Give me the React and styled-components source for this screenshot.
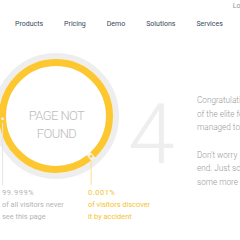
import React from 'react';
import styled, { createGlobalStyle } from 'styled-components';

const GlobalStyle = createGlobalStyle`
  html, body {
    margin: 0;
    padding: 0;
    background: #fff;
    overflow: hidden;
    font-family: Roboto, "Liberation Sans", sans-serif;
  }
`;

const YELLOW = '#fdc82f';

const Page = styled.div`
  width: 240px;
  height: 240px;
  overflow: hidden;
`;

const TopBar = styled.div`
  display: flex;
  justify-content: flex-end;
  height: 12px;
`;

const Login = styled.a`
  margin-right: -10px;
  font-size: 7px;
  line-height: 12px;
  color: #8a94a0;
  text-decoration: none;
`;

const Nav = styled.nav`
  display: flex;
  gap: 21px;
  height: 24px;
  align-items: center;
  padding-left: 15px;
`;

const NavLink = styled.a`
  font-size: 7px;
  font-weight: 400;
  color: #37475a;
  text-decoration: none;
  white-space: nowrap;
`;

const Main = styled.main`
  display: flex;
  align-items: flex-start;
  margin-top: 17px;
`;

const ChartArea = styled.div`
  position: relative;
  flex: 0 0 130px;
  min-width: 0;
  margin-left: -7px;
`;

const ChartSvg = styled.svg`
  display: block;
`;

const ChartLabel = styled.div`
  position: absolute;
  top: 54px;
  left: 0;
  width: 127px;
  text-align: center;
  font-size: 13px;
  font-weight: 300;
  letter-spacing: -0.6px;
  line-height: 18px;
  color: #bdbdbd;
`;

const Stats = styled.div`
  display: flex;
  margin-top: 2px;
  padding-left: 9px;
`;

const Stat = styled.div`
  flex: 0 0 ${p => p.$width}px;
  color: ${p => p.$color};
  font-size: 7.4px;
  line-height: 12px;
  white-space: nowrap;
`;

const StatValue = styled.div`
  letter-spacing: 0.6px;
`;

const Digit = styled.div`
  flex: 0 0 74px;
  margin-top: 39px;
  padding-left: 5px;
  box-sizing: border-box;
  font-size: 84px;
  font-weight: 300;
  line-height: 86px;
  color: #eeeeee;
`;

const Copy = styled.div`
  margin-top: 41px;
  color: #9a9a9a;
  font-size: 8.2px;
  font-weight: 300;
  line-height: 13.7px;
  white-space: nowrap;
`;

const Para = styled.p`
  margin: 0 0 13.5px;
`;

const R = 53.5;
const C = 2 * Math.PI * R;
const GAP = 5;
const GAP_ANGLE = 139;

const polar = (deg, r) => {
  const a = (deg * Math.PI) / 180;
  return [63 + r * Math.sin(a), 63 - r * Math.cos(a)];
};

const Chart = () => {
  const s = (GAP_ANGLE / 360) * C;
  const [gx, gy] = polar(GAP_ANGLE, R);
  const [lx, ly] = polar(267, R);
  return (
    <ChartSvg width="130" height="132" viewBox="0 0 130 132">
      <circle cx="63" cy="63" r="60" fill="#fff" stroke="#eeeeee" strokeWidth="6" />
      <circle cx="63" cy="63" r={R} fill="none" stroke="#f3f3f3" strokeWidth="7" />
      <circle
        cx="63"
        cy="63"
        r={R}
        fill="none"
        stroke={YELLOW}
        strokeWidth="7"
        strokeDasharray={`${C - GAP} ${GAP}`}
        strokeDashoffset={C - s - GAP / 2}
        transform="rotate(-90 63 63)"
      />
      <circle cx={lx} cy={ly} r="1.4" fill="#f4f4f4" />
      <line x1={lx} y1={ly + 4} x2={lx} y2="132" stroke="#e4e4e4" strokeWidth="1" />
      <circle cx={gx} cy={gy} r="1.4" fill={YELLOW} />
      <line x1={gx} y1={gy + 3} x2={gx} y2="132" stroke="#fbe08c" strokeWidth="1" />
    </ChartSvg>
  );
};

export default function App() {
  return (
    <Page>
      <GlobalStyle />
      <TopBar>
        <Login href="#">Login</Login>
      </TopBar>
      <Nav>
        <NavLink href="#">Products</NavLink>
        <NavLink href="#">Pricing</NavLink>
        <NavLink href="#">Demo</NavLink>
        <NavLink href="#">Solutions</NavLink>
        <NavLink href="#">Services</NavLink>
      </Nav>
      <Main>
        <ChartArea>
          <Chart />
          <ChartLabel>
            PAGE NOT
            <br />
            FOUND
          </ChartLabel>
          <Stats>
            <Stat $width={86} $color="#b4b4b4">
              <StatValue>99.999%</StatValue>
              of all visitors never
              <br />
              see this page
            </Stat>
            <Stat $width={80} $color="#f5c22a">
              <StatValue>0.001%</StatValue>
              of visitors discover
              <br />
              it by accident
            </Stat>
          </Stats>
        </ChartArea>
        <Digit>4</Digit>
        <Copy>
          <Para>
            Congratulations, you're one
            <br />
            of the elite few who have
            <br />
            managed to find this page.
          </Para>
          <Para>
            Don't worry – this is not the
            <br />
            end. Just scroll down to find
            <br />
            some more cool stuff.
          </Para>
        </Copy>
      </Main>
    </Page>
  );
}
